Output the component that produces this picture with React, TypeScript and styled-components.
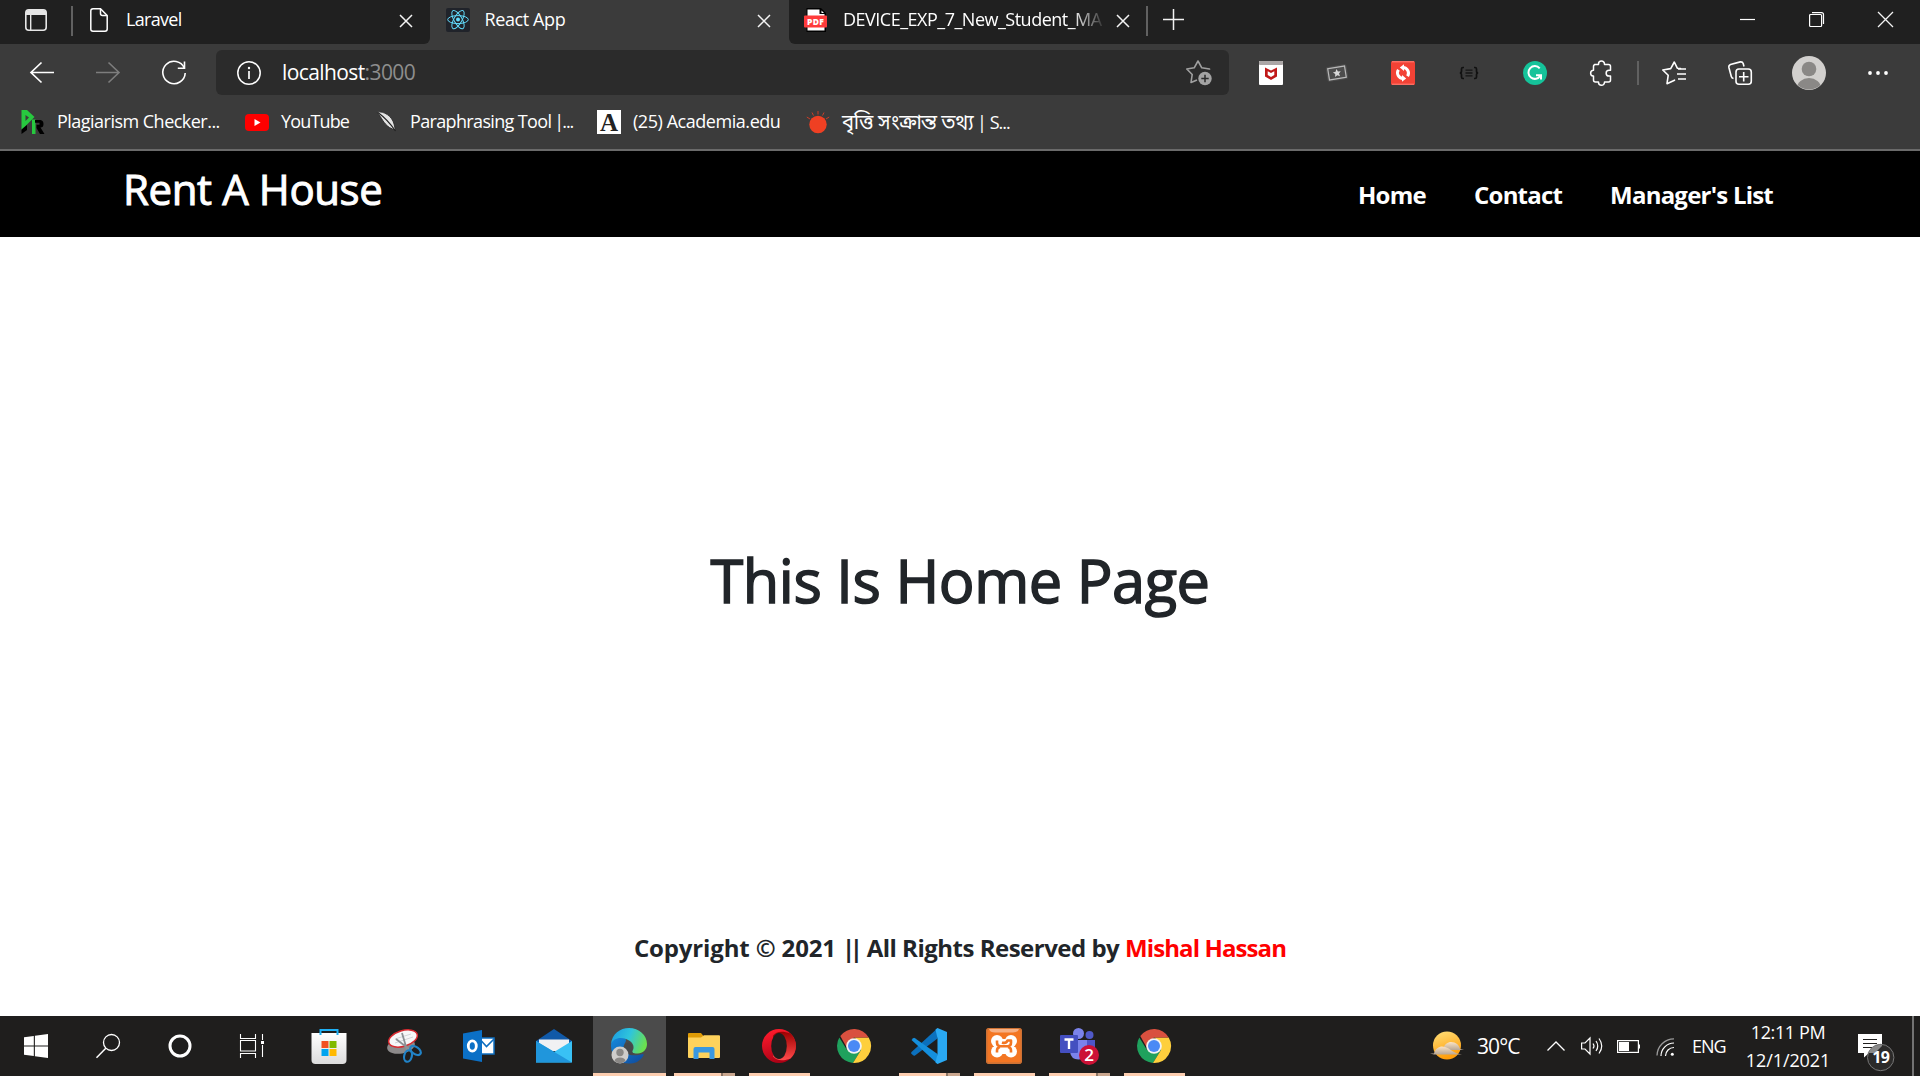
import React from "react";
import styled, { createGlobalStyle, css } from "styled-components";

const GlobalStyle = createGlobalStyle`
  * { box-sizing: border-box; }
  html, body { margin: 0; padding: 0; background: #fff; }
  body { font-family: "Open Sans", "Noto Sans", "Noto Sans Bengali", sans-serif; overflow: hidden; }
`;

const Screen = styled.div`
  display: flex;
  flex-direction: column;
  width: 1920px;
  height: 1076px;
  overflow: hidden;
`;

const Text = styled.span<{ $size?: number; $ls?: number; $color?: string; $weight?: number; $stroke?: number }>`
  font-size: ${(p) => p.$size ?? 18}px;
  letter-spacing: ${(p) => p.$ls ?? 0}px;
  color: ${(p) => p.$color ?? "#fff"};
  font-weight: ${(p) => p.$weight ?? 400};
  -webkit-text-stroke: ${(p) => p.$stroke ?? 0}px currentColor;
  white-space: pre;
  line-height: 1.36;
`;

const Cell = styled.div<{ $w: number; $dy?: number; $top?: number }>`
  flex: none;
  display: flex;
  align-items: center;
  justify-content: center;
  width: ${(p) => p.$w}px;
  height: 100%;
  padding-top: ${(p) => p.$top ?? 0}px;
  padding-bottom: ${(p) => p.$dy ?? 0}px;
`;

const Glyph = styled.svg`
  display: block;
  flex: none;
  fill: none;
  overflow: visible;
`;

/* ---------- tab strip ---------- */

const TabStrip = styled.div`
  flex: none;
  display: flex;
  height: 44px;
  background: #202020;
`;

const Rule = styled.div<{ $h: number; $top?: number }>`
  flex: none;
  width: 2px;
  height: ${(p) => p.$h}px;
  margin-top: ${(p) => p.$top ?? 0}px;
  background: #616161;
`;

const TabShell = styled.div<{ $w: number; $active?: boolean; $pad: number }>`
  flex: none;
  display: flex;
  align-items: center;
  width: ${(p) => p.$w}px;
  height: 44px;
  padding: 0 14px 5px ${(p) => p.$pad}px;
  background: ${(p) => (p.$active ? "#3b3b3b" : "#202020")};
`;

const TabTitle = styled.div<{ $fade?: boolean; $gap?: number }>`
  flex: 1;
  min-width: 0;
  display: flex;
  margin: 0 8px 0 ${(p) => p.$gap ?? 15}px;
  ${(p) =>
    p.$fade &&
    css`
      mask-image: linear-gradient(to right, #000 calc(100% - 34px), transparent);
    `}
`;

const TabSeat = styled.div`
  display: flex;
  background: #3b3b3b;
`;

const RoundedTab = styled.div<{ $side: "left" | "right" }>`
  display: flex;
  overflow: hidden;
  background: #202020;
  ${(p) => (p.$side === "right" ? "border-bottom-right-radius: 6px;" : "border-bottom-left-radius: 6px;")}
`;

const StripRest = styled.div`
  flex: 1;
  display: flex;
  justify-content: flex-end;
`;

const CloseX = ({ s = 12, w = 1.5 }: { s?: number; w?: number }) => (
  <Glyph width={s} height={s} viewBox={`0 0 ${s} ${s}`}>
    <path d={`M0 0L${s} ${s}M${s} 0L0 ${s}`} stroke="#f4f4f4" strokeWidth={w} />
  </Glyph>
);

const ReactLogo = () => (
  <Glyph width="24" height="24" viewBox="0 0 24 24">
    <rect width="24" height="24" rx="2" fill="#20232a" />
    <g stroke="#61dafb" strokeWidth="1">
      <ellipse cx="12" cy="11.600" rx="10.300" ry="4" />
      <ellipse cx="12" cy="11.600" rx="10.300" ry="4" transform="rotate(60 12 11.6)" />
      <ellipse cx="12" cy="11.600" rx="10.300" ry="4" transform="rotate(120 12 11.6)" />
    </g>
    <circle cx="12" cy="11.600" r="2" fill="#61dafb" />
  </Glyph>
);

const PdfIcon = () => (
  <Glyph width="24" height="24" viewBox="0 0 24 24">
    <path d="M2.500 0H17L22 5V24H2.500Z" fill="#000" />
    <path d="M3.500 1.500H15.500V6H20.500V22.500H3.500Z" fill="#fff" />
    <path d="M17.500 2.500L20 5H17.500Z" fill="#fff" />
    <rect x="0" y="7.500" width="23" height="12" rx="1" fill="#ff3b3b" />
    <text x="11.600" y="16.700" textAnchor="middle" fontSize="8.500" fontWeight="800" fill="#fff" fontFamily="Open Sans" letterSpacing=".4">PDF</text>
  </Glyph>
);

/* ---------- toolbar ---------- */

const Toolbar = styled.div`
  flex: none;
  display: flex;
  height: 56px;
  align-items: center;
  padding: 1px 0 0 9px;
  background: #3b3b3b;
`;

const AddressBar = styled.div`
  flex: none;
  display: flex;
  align-items: center;
  width: 1013px;
  height: 45px;
  margin: 0 9px;
  padding: 0 17px 0 21px;
  border-radius: 6px;
  background: #2b2b2b;
`;

const Url = styled.div`
  flex: 1;
  padding: 0 0 0 21px;
`;

const Bookmarks = styled.div`
  flex: none;
  display: flex;
  height: 51px;
  padding: 0 0 5px 21px;
  background: #3b3b3b;
  border-bottom: 2px solid #6a6a6a;
`;

const Bookmark = styled.div<{ $w: number; $gap?: number }>`
  flex: none;
  display: flex;
  align-items: center;
  gap: ${(p) => p.$gap ?? 12}px;
  width: ${(p) => p.$w}px;
`;

const BookmarkLabel = styled.div`
  display: flex;
  align-items: baseline;
  padding-bottom: 1px;
`;

const McAfee = () => (
  <Glyph width="24" height="24" viewBox="0 0 24 24">
    <rect width="24" height="24" rx="1" fill="#fff" />
    <rect width="24" height="4" rx="1" fill="#aca7a7" />
    <path d="M6 6.500L12 9.500L18 6.500V15.500L12 19L6 15.500Z" fill="#c01818" />
    <path d="M8.700 10.200L12 12L15.300 10.200V14L12 16L8.700 14Z" fill="#fff" />
  </Glyph>
);

const Ticket = () => (
  <Glyph width="24" height="24" viewBox="0 0 24 24">
    <g transform="rotate(-9 12 12)">
      <rect x="1.500" y="4.500" width="21" height="15" rx="2" fill="#4c4c4c" />
      <rect x="3.500" y="6.300" width="17" height="11.400" stroke="#b9b9b9" strokeWidth="1.200" />
      <path d="M12 8l1.200 2.600 2.800.3-2.100 1.900.6 2.800L12 14.200l-2.500 1.400.6-2.800L8 10.900l2.800-.3z" fill="#d6d6d6" />
    </g>
  </Glyph>
);

const SyncRed = () => (
  <Glyph width="24" height="24" viewBox="0 0 24 24">
    <rect width="24" height="24" rx="1.500" fill="#f24235" />
    <path d="M1 .8h22M1 23.200h22" stroke="#ff8379" strokeWidth="1" />
    <path d="M12 6.600A5.600 5.600 0 0 1 16.600 15.200" stroke="#fff" strokeWidth="3" />
    <path d="M13 3.300V10L8.800 6.600Z" fill="#fff" />
    <path d="M12 17.400A5.600 5.600 0 0 1 7.400 8.800" stroke="#fff" strokeWidth="3" />
    <path d="M11 20.700V14L15.200 17.400Z" fill="#fff" />
  </Glyph>
);

const Braces = () => (
  <Glyph width="20" height="14" viewBox="0 0 20 14">
    <path d="M5 1.500H4Q2.500 1.500 2.500 3V5Q2.500 7 .8 7Q2.500 7 2.500 9V11Q2.500 12.500 4 12.500H5M15 1.500H16Q17.500 1.500 17.500 3V5Q17.500 7 19.200 7Q17.500 7 17.500 9V11Q17.500 12.500 16 12.500H15" stroke="#111" strokeWidth="1.700" />
    <path d="M6.500 4.200H13.500M6.500 7H13.500M6.500 9.800H13.500" stroke="#161616" strokeWidth="1.300" />
  </Glyph>
);

const Grammarly = () => (
  <Glyph width="24" height="24" viewBox="0 0 24 24">
    <circle cx="12" cy="12" r="12" fill="#15c39a" />
    <path d="M16.700 7.300A6.400 6.400 0 1 0 17.300 14.800" stroke="#fff" strokeWidth="2" />
    <path d="M13 14.300H18V18.500" stroke="#fff" strokeWidth="2" />
  </Glyph>
);

const Puzzle = () => (
  <Glyph width="24" height="26" viewBox="0 0 24 26">
    <path
      d="M5.500 4.500H9.500V4A3 3 0 0 1 15.500 4V4.500H19.500Q21.500 4.500 21.500 6.500V10.300H20A2.800 2.800 0 0 0 20 16H21.500V20Q21.500 22 19.500 22H15.500V22.300A3 3 0 0 1 9.500 22.300V22H6.500Q4.500 22 4.500 20V16H4A2.900 2.900 0 0 1 4 10.300H4.500V6.500Q4.500 4.500 6.500 4.500Z"
      stroke="#fff" strokeWidth="1.500" strokeLinejoin="round"
    />
  </Glyph>
);

const FavList = () => (
  <Glyph width="24" height="24" viewBox="0 0 24 24">
    <path d="M18.500 7.500L15.300 7.200L12.300 1L8.700 7.600L.8 9L6.200 14.300L5 22.700L12.500 19.200" stroke="#fff" strokeWidth="1.600" strokeLinejoin="round" strokeLinecap="round" />
    <path d="M16 8H24M15 13H24M16 18H24" stroke="#fff" strokeWidth="1.600" />
  </Glyph>
);

const Collections = () => (
  <Glyph width="24" height="24" viewBox="0 0 24 24">
    <rect x="8" y="8" width="15.300" height="15.300" rx="3" stroke="#fff" strokeWidth="1.600" />
    <path d="M15.700 11V20.500M11 15.700H20.500" stroke="#fff" strokeWidth="1.600" />
    <path d="M5.500 17.500Q3.800 17.300 3.300 15.500L.9 6.500Q.5 4.300 2.500 3.500L12.300 .9Q14.500 .6 15.200 2.600L16 5.500" stroke="#fff" strokeWidth="1.600" />
  </Glyph>
);

const Avatar = () => (
  <Glyph width="34" height="34" viewBox="0 0 34 34">
    <clipPath id="av"><circle cx="17" cy="17" r="16.500" /></clipPath>
    <circle cx="17" cy="17" r="17" fill="#d2d0ce" />
    <circle cx="17" cy="13" r="7.300" fill="#8a8886" />
    <ellipse cx="17" cy="32" rx="12" ry="10" fill="#8a8886" clipPath="url(#av)" />
  </Glyph>
);

/* ---------- page ---------- */

const Navbar = styled.header`
  flex: none;
  display: flex;
  justify-content: space-between;
  height: 86px;
  padding: 0 147px 0 123px;
  background: #000;
`;

const Brand = styled.div`
  padding-top: 9px;
`;

const NavLinks = styled.nav`
  display: flex;
  gap: 48px;
  padding-top: 28px;
`;

const Page = styled.main`
  flex: 1;
  display: flex;
  flex-direction: column;
  align-items: center;
  background: #fff;
`;

const Hero = styled.h1`
  margin: 302px 0 0;
  font-size: 59.5px;
  font-weight: 400;
  line-height: 82px;
  letter-spacing: -0.45px;
  -webkit-text-stroke: 1.5px currentColor;
  color: #212529;
  white-space: nowrap;
`;

const Footer = styled.footer`
  display: flex;
  margin-top: 311px;
`;

const Bars = styled.span`
  margin-right: 3px;
`;

/* ---------- taskbar ---------- */

const Taskbar = styled.div`
  flex: none;
  display: flex;
  height: 60px;
  background: #1f1e1d;
`;

const Pinned = styled.div`
  display: flex;
  padding-left: 4px;
`;

const TaskButton = styled.div<{ $active?: boolean }>`
  flex: none;
  display: flex;
  flex-direction: column;
  align-items: center;
  width: ${(p) => (p.$active ? 73 : 75)}px;
  margin: 0 ${(p) => (p.$active ? 1 : 0)}px;
  height: 60px;
  background: ${(p) => (p.$active ? "#4b4b4b" : "transparent")};
`;

const AppIcon = styled.div`
  height: 57px;
  display: flex;
  align-items: center;
  padding: 3px 1px 0 0;
`;

const Running = styled.div<{ $full?: boolean }>`
  display: flex;
  width: ${(p) => (p.$full ? "100%" : "61px")};
  height: 3px;
  background: #fdceb0;
`;

const Stack = styled.div`
  width: 14px;
  margin-left: auto;
  background: #caa78f;
  border-left: 2px solid #8b7565;
`;

const Tray = styled.div`
  flex: 1;
  display: flex;
  align-items: center;
`;

const Spot = styled.div<{ $l?: number; $w?: number; $down?: number }>`
  flex: none;
  display: flex;
  justify-content: flex-start;
  margin-left: ${(p) => p.$l ?? 0}px;
  width: ${(p) => (p.$w ? p.$w + "px" : "auto")};
  padding-top: ${(p) => p.$down ?? 0}px;
`;

const Clock = styled.div`
  flex: none;
  display: flex;
  flex-direction: column;
  align-items: center;
  width: 100px;
  margin-left: 13px;
  gap: 4px;
`;

const ShowDesktop = styled.div`
  flex: none;
  width: 8px;
  height: 60px;
  margin-left: auto;
  border-left: 2px solid #737373;
`;

const Chrome = () => (
  <Glyph width="34" height="34" viewBox="0 0 34 34">
    <path d="M2.300 8.500A17 17 0 0 0 16 34L24 21L10 21Z" fill="#1fa15d" />
    <path d="M31.700 8.500A17 17 0 0 1 16 34L24 21L22 12L17 8.500Z" fill="#fecf3d" />
    <path d="M3.300 7A17 17 0 0 1 31.700 8.500H17L9.500 18Z" fill="#d9503f" />
    <circle cx="17" cy="17" r="7.800" fill="#f3f3f3" />
    <circle cx="17" cy="17" r="6" fill="#4a8af5" />
  </Glyph>
);

const Store = () => (
  <Glyph width="36" height="36" viewBox="0 0 36 36">
    <defs>
      <linearGradient id="bag" x1="0" y1="0" x2="0" y2="1"><stop offset="0" stopColor="#fff" /><stop offset="1" stopColor="#dcdcdc" /></linearGradient>
    </defs>
    <path d="M.5 5H35.500V32Q35.500 36 31.500 36H4.500Q.5 36 .5 32Z" fill="url(#bag)" />
    <path d="M9.500 7V2H26.500V7" stroke="#1fb0f4" strokeWidth="2" />
    <path d="M10.500 13h7v7h-7z" fill="#f25022" />
    <path d="M18.500 13h7v7h-7z" fill="#7fba00" />
    <path d="M10.500 21h7v7h-7z" fill="#00a4ef" />
    <path d="M18.500 21h7v7h-7z" fill="#ffb900" />
  </Glyph>
);

const Snip = () => (
  <Glyph width="35" height="36" viewBox="0 0 35 36">
    <ellipse cx="14" cy="18" rx="14" ry="7.500" fill="#8d8a8a" transform="rotate(-10 14 18)" />
    <ellipse cx="16" cy="10.500" rx="14.800" ry="7.800" fill="#f6f7f8" stroke="#d8292f" strokeWidth="1.500" transform="rotate(-17 16 10.5)" />
    <path d="M8 11L24 6M8 15L26 9" stroke="#d2d5d8" strokeWidth="1" />
    <path d="M15 5L20 22M9 11L22 21" stroke="#8d9195" strokeWidth="1.800" />
    <ellipse cx="21" cy="28" rx="3.800" ry="5.800" stroke="#2183c7" strokeWidth="2.200" transform="rotate(15 21 28)" />
    <ellipse cx="28.500" cy="22.500" rx="3.600" ry="6" stroke="#2183c7" strokeWidth="2.200" transform="rotate(-55 28.5 22.5)" />
  </Glyph>
);

const Outlook = () => (
  <Glyph width="32" height="32" viewBox="0 0 32 32">
    <rect x="17" y="8" width="14" height="16" fill="#fff" stroke="#0f6fc0" strokeWidth="1.500" />
    <path d="M18 10.500L23.500 16.500L31 9" stroke="#0f6fc0" strokeWidth="1.600" />
    <path d="M0 3.500L19 0V32L0 28.500Z" fill="#0b70c6" />
    <ellipse cx="9.300" cy="16" rx="4" ry="5.200" stroke="#fff" strokeWidth="2.800" />
  </Glyph>
);

const Mail = () => (
  <Glyph width="36" height="34" viewBox="0 0 36 34">
    <path d="M0 12L18 0L36 12V20H0Z" fill="#1059a8" />
    <path d="M3 10.500H33V22H3Z" fill="#f1f1f3" />
    <path d="M0 12L18 23L36 12V33.500H0Z" fill="#39c1f5" />
    <path d="M0 12L36 33.500H0Z" fill="#2096dc" />
  </Glyph>
);

const Edge = () => (
  <Glyph width="36" height="36" viewBox="0 0 36 36">
    <defs>
      <linearGradient id="e1" x1="0" y1=".2" x2="1" y2=".5"><stop offset="0" stopColor="#1b9de2" /><stop offset=".5" stopColor="#2fc5dc" /><stop offset="1" stopColor="#6be04d" /></linearGradient>
      <linearGradient id="e2" x1="0" y1="0" x2="1" y2="1"><stop offset="0" stopColor="#1589dc" /><stop offset="1" stopColor="#0f4a9c" /></linearGradient>
    </defs>
    <path d="M0 18C0 9 7 8 13 10C18 12 12 16 12.500 20C13.500 27 22 29 32 26C34 26 31 31 26 34C13 39 0 31 0 18Z" fill="url(#e2)" />
    <path d="M0 16C1 6 9 0 18 0C28 0 36 7 36 16C36 22 31 26 26 25.500C22 25.500 20 24.500 22 22C24 18 21 13 15 11C8 8.500 2 11 0 16Z" fill="url(#e1)" />
    <path d="M17.500 14.500C20 15.500 22.500 18 21.500 21.500C20.500 24 21.500 25 23.500 26C18 28 13 24 13 19.500C13.200 17 15 15 17.500 14.500Z" fill="#45474a" />
    <circle cx="9" cy="27" r="8.500" fill="#cfcdcb" />
    <circle cx="9" cy="24.500" r="3.700" fill="#8a8886" />
    <path d="M3.500 33Q4 29.500 9 29.500Q14 29.500 14.500 33Q9 37.500 3.500 33Z" fill="#8a8886" />
  </Glyph>
);

const Folder = () => (
  <Glyph width="32" height="26" viewBox="0 0 32 26">
    <path d="M0 1Q0 0 1 0H13L15.500 3H15V8H0Z" fill="#de9b06" />
    <path d="M0 4.500H13L16 2.300H31Q32 2.300 32 3.300V24Q32 25 31 25H1Q0 25 0 24Z" fill="#fed25c" />
    <path d="M5.500 26V16Q5.500 14 7.500 14H24.500Q26.500 14 26.500 16V26H21.500V19.500H10.500V26Z" fill="#3a98e0" />
  </Glyph>
);

const Opera = () => (
  <Glyph width="34" height="34" viewBox="0 0 34 34">
    <defs>
      <linearGradient id="o1" x1=".3" y1="0" x2=".6" y2="1"><stop offset="0" stopColor="#ff1b2d" /><stop offset="1" stopColor="#a70014" /></linearGradient>
      <linearGradient id="o2" x1="0" y1="0" x2="0" y2="1"><stop offset="0" stopColor="#9c0000" /><stop offset="1" stopColor="#ff4b4b" /></linearGradient>
    </defs>
    <circle cx="17" cy="17" r="17" fill="url(#o1)" />
    <path d="M11 6.500C14 2.500 20 1.500 28.500 4.500Q34 10 34 17T28.500 29.500C21 32.500 14 31.500 11 27.500Z" fill="url(#o2)" />
    <ellipse cx="17" cy="17" rx="7.800" ry="13" fill="#1f1e1d" />
  </Glyph>
);

const VsCode = () => (
  <Glyph width="36" height="36" viewBox="0 0 36 36">
    <path d="M26.500 .3V10.500L4 27.500Q3 28 2 27.300L.4 25.700Q-.3 25 .5 24Z" fill="#0b70bd" />
    <path d="M.5 12L2.200 10.200Q3 9.500 4 10.200L26.500 26V35.700Z" fill="#148fdd" />
    <path d="M26.500 0L36 4V32L26.500 36L24.500 34.500L26.500 26V10.500L24.500 1.500Z" fill="#2aa9f3" />
  </Glyph>
);

const Xampp = () => (
  <Glyph width="36" height="36" viewBox="0 0 36 36">
    <rect width="36" height="36" rx="3" fill="#f37623" />
    <rect x=".8" y=".8" width="34.400" height="34.400" rx="2.500" stroke="#c2713b" strokeWidth="1.200" />
    <path d="M3 1H33Q32 4.500 27 4.500H9Q4 4.500 3 1Z" fill="#f7b084" />
    <g fill="#fff">
      <circle cx="11" cy="13" r="6" />
      <circle cx="25" cy="13" r="6" />
      <circle cx="11" cy="23.500" r="6" />
      <circle cx="25" cy="23.500" r="6" />
      <rect x="8" y="11" width="20" height="15" />
    </g>
    <path d="M16.800 6.500H19.200L18 9.500ZM16.800 30H19.200L18 27Z" fill="#f37623" />
    <path d="M11 12.500V14.800Q11 18.300 14.500 18.300H21.500Q25 18.300 25 14.800V12.500H21.500Q20 16 16 14.500M11 24.500V22.500Q11 19.500 14 19M25 24.500V22.500Q25 19.500 22 19" stroke="#f37623" strokeWidth="2.600" strokeLinejoin="round" />
  </Glyph>
);

const Teams = () => (
  <Glyph width="40" height="38" viewBox="0 0 40 38">
    <circle cx="19.500" cy="6.500" r="5.500" fill="#7b83eb" />
    <circle cx="30.500" cy="8" r="4" fill="#5059c9" />
    <path d="M25 13H36V24Q34 29 27 27Z" fill="#4d55c8" />
    <path d="M11 13H28V24Q27 32.500 19.500 32.500T11 25Z" fill="#7b83eb" />
    <rect x="1" y="8" width="18" height="18" rx="1" fill="#444fc0" />
    <path d="M5.500 12.500H14.500M10 12.500V22" stroke="#fff" strokeWidth="2.400" />
    <circle cx="30" cy="28" r="10" fill="#cc1236" />
    <text x="30" y="34" textAnchor="middle" fontSize="17" fontWeight="600" fill="#fff" fontFamily="Open Sans">2</text>
  </Glyph>
);

const Weather = () => (
  <Glyph width="34" height="30" viewBox="0 0 34 30">
    <defs>
      <linearGradient id="sun" x1="0" y1="0" x2=".3" y2="1"><stop offset="0" stopColor="#ffe07a" /><stop offset="1" stopColor="#ff9d0a" /></linearGradient>
      <linearGradient id="cl" x1="0" y1="0" x2="0" y2="1"><stop offset="0" stopColor="#fbe3c4" /><stop offset="1" stopColor="#b9a794" /></linearGradient>
    </defs>
    <circle cx="17" cy="14.500" r="14" fill="url(#sun)" />
    <path d="M13 19C14 13 18 11 21 11C26 11 29 14 30 18L34 19Z" fill="url(#cl)" />
    <path d="M0 22.500H4C6 16 11 14.500 15 16C19 17 20 19 27 22.500L32 23.500H4Z" fill="url(#cl)" />
  </Glyph>
);

const taskApps: { icon: React.ReactNode; run?: boolean; stack?: boolean; active?: boolean }[] = [
  { icon: <Store /> },
  { icon: <Snip /> },
  { icon: <Outlook /> },
  { icon: <Mail /> },
  { icon: <Edge />, run: true, active: true },
  { icon: <Folder />, run: true, stack: true },
  { icon: <Opera />, run: true },
  { icon: <Chrome /> },
  { icon: <VsCode />, run: true, stack: true },
  { icon: <Xampp />, run: true },
  { icon: <Teams />, run: true, stack: true },
  { icon: <Chrome />, run: true },
];

export default function App() {
  return (
    <>
      <GlobalStyle />
      <Screen>
        <TabStrip>
          <Cell $w={71} $dy={4}>
            <Glyph width="22" height="22" viewBox="0 0 22 22">
              <rect x=".8" y=".8" width="20.400" height="20.400" rx="3" stroke="#e6e6e6" strokeWidth="1.600" />
              <path d="M1 6V4Q1 1 4 1H18Q21 1 21 4V6Z" fill="#e6e6e6" />
              <path d="M5.700 6V21" stroke="#e6e6e6" strokeWidth="1.400" />
            </Glyph>
          </Cell>
          <Rule $h={30} $top={6} />
          <TabSeat>
            <RoundedTab $side="right">
              <TabShell $w={357} $pad={17}>
                <Glyph width="18" height="24" viewBox="0 0 18 24">
                  <path d="M3 .8H10.500L17.200 7.500V21Q17.200 23.200 15 23.200H3Q.8 23.200 .8 21V3Q.8 .8 3 .8Z" stroke="#fff" strokeWidth="1.500" />
                  <path d="M10.500 1V5.500Q10.500 7.500 12.500 7.500H17" stroke="#fff" strokeWidth="1.500" />
                </Glyph>
                <TabTitle $gap={18}><Text $ls={-0.7}>Laravel</Text></TabTitle>
                <Cell $w={20} $top={2}><CloseX /></Cell>
              </TabShell>
            </RoundedTab>
            <TabShell $w={359} $pad={16} $active>
              <ReactLogo />
              <TabTitle $gap={14.5}><Text $ls={-0.4}>React App</Text></TabTitle>
              <Cell $w={22} $top={2}><CloseX /></Cell>
            </TabShell>
            <RoundedTab $side="left">
              <TabShell $w={357} $pad={15}>
                <PdfIcon />
                <TabTitle $fade><Text $ls={-0.5}>DEVICE_EXP_7_New_Student_MA</Text></TabTitle>
                <Cell $w={18} $top={2}><CloseX /></Cell>
              </TabShell>
            </RoundedTab>
          </TabSeat>
          <Rule $h={30} $top={6} />
          <Cell $w={51} $dy={5}>
            <Glyph width="21" height="21" viewBox="0 0 21 21">
              <path d="M10.500 0V21M0 10.500H21" stroke="#f2f2f2" strokeWidth="1.500" />
            </Glyph>
          </Cell>
          <StripRest>
            <Cell $w={69} $dy={5}>
              <Glyph width="15" height="15" viewBox="0 0 15 15"><path d="M0 7.500H15" stroke="#fff" strokeWidth="1.200" /></Glyph>
            </Cell>
            <Cell $w={69} $dy={5}>
              <Glyph width="15" height="15" viewBox="0 0 15 15">
                <rect x=".6" y="2.500" width="12" height="12" rx="1" stroke="#fff" strokeWidth="1.200" />
                <path d="M3 .6H12.500Q14.500 .6 14.500 2.600V12" stroke="#fff" strokeWidth="1.200" />
              </Glyph>
            </Cell>
            <Cell $w={69} $dy={5}><CloseX s={15} w={1.3} /></Cell>
          </StripRest>
        </TabStrip>

        <Toolbar>
          <Cell $w={66}>
            <Glyph width="24" height="21" viewBox="0 0 24 21"><path d="M24 10.500H1M11.500 .5L1 10.500L11.500 20.500" stroke="#fff" strokeWidth="1.700" /></Glyph>
          </Cell>
          <Cell $w={66}>
            <Glyph width="24" height="21" viewBox="0 0 24 21"><path d="M0 10.500H23M12.500 .5L23 10.500L12.500 20.500" stroke="#7d7d7d" strokeWidth="1.600" /></Glyph>
          </Cell>
          <Cell $w={66}>
            <Glyph width="24" height="24" viewBox="0 0 24 24">
              <path d="M22.300 7A11.200 11.200 0 1 0 23.200 12" stroke="#fff" strokeWidth="1.600" />
              <path d="M22.500 .5V7.200H15.800" stroke="#fff" strokeWidth="1.600" />
            </Glyph>
          </Cell>
          <AddressBar>
            <Glyph width="24" height="24" viewBox="0 0 24 24">
              <circle cx="12" cy="12" r="11.200" stroke="#fff" strokeWidth="1.500" />
              <path d="M12 10V18" stroke="#fff" strokeWidth="1.700" />
              <circle cx="12" cy="7" r="1.200" fill="#fff" />
            </Glyph>
            <Url>
              <Text $size={21} $ls={-0.6}>localhost</Text>
              <Text $size={21} $ls={-0.6} $color="#8e8e8e">:3000</Text>
            </Url>
            <Glyph width="26" height="25" viewBox="0 0 26 25">
              <path d="M23.500 9.700V9L15.800 7.800L12 1L8.200 7.800L.8 9L6.200 14.500L5 22.500L11 20" stroke="#a0a0a0" strokeWidth="1.600" strokeLinejoin="round" />
              <circle cx="19" cy="18.500" r="6.700" fill="#a3a3a3" />
              <path d="M19 14.800V22.200M15.300 18.500H22.700" stroke="#2b2b2b" strokeWidth="1.500" />
            </Glyph>
          </AddressBar>
          <Cell $w={66}><McAfee /></Cell>
          <Cell $w={66}><Ticket /></Cell>
          <Cell $w={66}><SyncRed /></Cell>
          <Cell $w={66}><Braces /></Cell>
          <Cell $w={66}><Grammarly /></Cell>
          <Cell $w={66}><Puzzle /></Cell>
          <Cell $w={7}><Rule $h={24} /></Cell>
          <Cell $w={66}><FavList /></Cell>
          <Cell $w={66}><Collections /></Cell>
          <Cell $w={71}><Avatar /></Cell>
          <Cell $w={68}>
            <Glyph width="20" height="4" viewBox="0 0 20 4">
              <circle cx="2" cy="2" r="1.900" fill="#fff" /><circle cx="10" cy="2" r="1.900" fill="#fff" /><circle cx="18" cy="2" r="1.900" fill="#fff" />
            </Glyph>
          </Cell>
        </Toolbar>

        <Bookmarks>
          <Bookmark $w={224}>
            <Glyph width="24" height="24" viewBox="0 0 24 24">
              <path d="M.5 0H6L13.500 7L.5 20Z" fill="#27c93f" />
              <path d="M4.500 5L8 7.500L4.500 11Z" fill="#3b3b3b" />
              <path d="M.5 24V19.500L6 15V20Z" fill="#000" />
              <path d="M11 9.500H14.500V24H11Z" fill="#27c93f" />
              <path d="M14 10H19.500Q22.500 10.500 22.500 14T19.500 17.500L23.500 24H19L15.500 18V14.800H18.500V12.800H14Z" fill="#000" />
            </Glyph>
            <BookmarkLabel><Text $ls={-0.52}>Plagiarism Checker...</Text></BookmarkLabel>
          </Bookmark>
          <Bookmark $w={130}>
            <Glyph width="24" height="17" viewBox="0 0 24 17">
              <rect width="24" height="17" rx="4" fill="#f00" />
              <path d="M9.500 5L15.500 8.500L9.500 12Z" fill="#fff" />
            </Glyph>
            <BookmarkLabel><Text $ls={-0.85}>YouTube</Text></BookmarkLabel>
          </Bookmark>
          <Bookmark $w={222} $gap={11}>
            <Glyph width="24" height="24" viewBox="0 0 24 24">
              <path d="M2 2C9 1 17 6 19 14L20.500 20.500L14.500 17.500C8 13 7 8 2 2Z" fill="#e4e4e4" stroke="#222" strokeWidth=".8" />
              <path d="M3 2.500Q13 10 20.500 21" stroke="#222" strokeWidth="1.200" />
            </Glyph>
            <BookmarkLabel>
              <Text $ls={-0.65}>Paraphrasing Tool</Text>
              <Text $ls={-1.8}> |</Text>
              <Text $ls={-1.1}>...</Text>
            </BookmarkLabel>
          </Bookmark>
          <Bookmark $w={209}>
            <Glyph width="24" height="24" viewBox="0 0 24 24">
              <rect width="24" height="24" fill="#fff" />
              <text x="12" y="21" textAnchor="middle" fontSize="25" fontWeight="700" fontFamily="Liberation Serif" fill="#222">A</text>
            </Glyph>
            <BookmarkLabel><Text $ls={-0.45}>(25) Academia.edu</Text></BookmarkLabel>
          </Bookmark>
          <Bookmark $w={240}>
            <Glyph width="24" height="24" viewBox="0 0 24 24">
              <circle cx="12" cy="14.500" r="8.700" fill="#ef4023" />
              <path d="M12 1V4.500M6 2.500L7.500 5.500M18 2.500L16.500 5.500M.8 7L4 9M23.200 7L20 9" stroke="#c93e28" strokeWidth="1" />
            </Glyph>
            <BookmarkLabel>
              <Text $size={20.2} $ls={-0.3}>বৃত্তি সংক্রান্ত তথ্য</Text>
              <Text $ls={-1}> | S...</Text>
            </BookmarkLabel>
          </Bookmark>
        </Bookmarks>

        <Navbar>
          <Brand><Text $size={42} $ls={-0.4} $stroke={1}>Rent A House</Text></Brand>
          <NavLinks>
            <Text $size={24} $weight={700} $ls={-0.7}>Home</Text>
            <Text $size={24} $weight={700} $ls={-0.8}>Contact</Text>
            <Text $size={24} $weight={700} $ls={-0.78}>Manager's List</Text>
          </NavLinks>
        </Navbar>

        <Page>
          <Hero>This Is Home Page</Hero>
          <Footer>
            <Text $size={24} $weight={700} $ls={-0.15} $color="#212529">Copyright © 2021 </Text>
            <Bars><Text $size={24} $weight={700} $ls={-5.5} $color="#212529">||</Text></Bars>
            <Text $size={24} $weight={700} $ls={0} $color="#212529"> </Text>
            <Text $size={24} $weight={700} $ls={-0.5} $color="#212529">All Rights Reserved by </Text>
            <Text $size={24} $weight={700} $ls={-0.9} $color="#f00">Mishal Hassan</Text>
          </Footer>
        </Page>

        <Taskbar>
          <Cell $w={72}>
            <Glyph width="24" height="24" viewBox="0 0 24 24">
              <path d="M0 3.300L9.800 2V11.500H0ZM10.900 1.800L24 0V11.500H10.900ZM0 12.500H9.800V22L0 20.700ZM10.900 12.500H24V24L10.900 22.200Z" fill="#fff" />
            </Glyph>
          </Cell>
          <Cell $w={72}>
            <Glyph width="24" height="24" viewBox="0 0 24 24">
              <circle cx="15.500" cy="8.500" r="8" stroke="#fff" strokeWidth="1.300" />
              <path d="M9.800 14.300L.5 23.700" stroke="#fff" strokeWidth="1.500" />
            </Glyph>
          </Cell>
          <Cell $w={72}>
            <Glyph width="24" height="24" viewBox="0 0 24 24"><circle cx="12" cy="12" r="10" stroke="#fff" strokeWidth="3" /></Glyph>
          </Cell>
          <Cell $w={72}>
            <Glyph width="24" height="24" viewBox="0 0 24 24">
              <path d="M.5 0V4.500H15.500V0M.5 24V19.500H15.500V24M.5 6.500H15.500V17H.5ZM22.500 0V6M22.500 11V23" stroke="#fff" strokeWidth="1.100" />
              <rect x="21" y="7" width="3" height="3" fill="#fff" />
            </Glyph>
          </Cell>
          <Pinned>
            {taskApps.map((a, i) => (
              <TaskButton key={i} $active={a.active}>
                <AppIcon>{a.icon}</AppIcon>
                {a.run && <Running $full={a.active}>{a.stack && <Stack />}</Running>}
              </TaskButton>
            ))}
          </Pinned>
          <Tray>
            <Spot $l={238} $w={34}><Weather /></Spot>
            <Spot $l={13} $w={70} $down={1}><Text $size={21} $ls={-0.9}>30°C</Text></Spot>
            <Spot $w={34}>
              <Glyph width="18" height="10" viewBox="0 0 18 10"><path d="M.5 9.500L9 1L17.500 9.500" stroke="#fff" strokeWidth="1.300" /></Glyph>
            </Spot>
            <Spot $w={36}>
              <Glyph width="22" height="18" viewBox="0 0 22 18">
                <path d="M.6 6H4L9 1V17L4 12H.6Z" stroke="#fff" strokeWidth="1.200" />
                <path d="M12 6.500Q14 9 12 11.500M15 4Q18.500 9 15 14M18 1.500Q23.500 9 18 16.500" stroke="#fff" strokeWidth="1.200" />
              </Glyph>
            </Spot>
            <Spot $w={39}>
              <Glyph width="23" height="13" viewBox="0 0 23 13">
                <rect x=".6" y=".6" width="20.800" height="11.800" stroke="#fff" strokeWidth="1.200" />
                <path d="M22.400 4.500V8.500" stroke="#fff" strokeWidth="1.200" />
                <rect x="2" y="2" width="10" height="9" fill="#fff" />
              </Glyph>
            </Spot>
            <Spot $w={36} $down={2}>
              <Glyph width="18" height="18" viewBox="0 0 18 18">
                <path d="M1 17.500A17 17 0 0 1 18 .8" stroke="#9a9a9a" strokeWidth="1.300" />
                <path d="M5 18A13 13 0 0 1 18 5M9.500 18A8.500 8.500 0 0 1 18 9.500" stroke="#fff" strokeWidth="1.200" />
                <circle cx="16.300" cy="16.300" r="1.500" fill="#fff" />
              </Glyph>
            </Spot>
            <Spot $w={33}><Text $ls={-1}>ENG</Text></Spot>
            <Clock>
              <Text $ls={-0.4}>12:11 PM</Text>
              <Text $ls={-0.1}>12/1/2021</Text>
            </Clock>
            <Spot $l={20} $down={8}>
              <Glyph width="38" height="38" viewBox="0 0 38 38">
                <path d="M0 3H24V22H11L6 26.500V22H0Z" fill="#fff" />
                <path d="M5 8.500H19M5 12.500H19M5 16.500H15" stroke="#1f1e1d" strokeWidth="1.200" />
                <circle cx="22.700" cy="26.500" r="13.200" fill="#2c2b2a" stroke="#777" strokeWidth="1" />
                <path d="M10.500 22A13 13 0 0 1 22 13.700L24 14V15L17 22Z" fill="#8a8a8a" />
                <text x="22.700" y="32" textAnchor="middle" fontSize="16" fontWeight="700" letterSpacing="-.6" fontFamily="Open Sans" fill="#fff">19</text>
              </Glyph>
            </Spot>
            <ShowDesktop />
          </Tray>
        </Taskbar>
      </Screen>
    </>
  );
}
